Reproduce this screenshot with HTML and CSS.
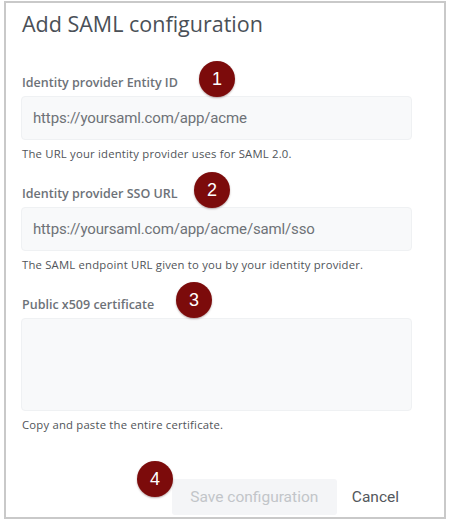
FILE: index.html
```html
<!DOCTYPE html>
<html lang="en">
<head>
<meta charset="utf-8">
<title>Add SAML configuration</title>
<link rel="stylesheet" href="styles.css">
</head>
<body>
<div class="frame">
  <h1 class="title">Add SAML configuration</h1>

  <div class="field field-first">
    <label class="label">Identity provider Entity ID</label>
    <div class="input">https://yoursaml.com/app/acme</div>
    <p class="help">The URL your identity provider uses for SAML 2.0.</p>
  </div>

  <div class="field">
    <label class="label">Identity provider SSO URL</label>
    <div class="input">https://yoursaml.com/app/acme/saml/sso</div>
    <p class="help">The SAML endpoint URL given to you by your identity provider.</p>
  </div>

  <div class="field">
    <label class="label">Public x509 certificate</label>
    <div class="input textarea"></div>
    <p class="help">Copy and paste the entire certificate.</p>
  </div>

  <div class="actions">
    <button class="btn btn-save" type="button">Save configuration</button>
    <button class="btn btn-cancel" type="button">Cancel</button>
  </div>

  <span class="badge badge-1">1</span>
  <span class="badge badge-2">2</span>
  <span class="badge badge-3">3</span>
  <span class="badge badge-4">4</span>
</div>
</body>
</html>
```

FILE: styles.css
```css
html, body {
  margin: 0;
  padding: 0;
  background: #ffffff;
}

.frame {
  position: relative;
  box-sizing: border-box;
  margin: 1px 0 0 4px;
  width: 442px;
  height: 518px;
  border: 2px solid #c9c9c9;
  padding: 6px 0 0 15px;
  overflow: hidden;
  font-family: "Open Sans", "Noto Sans", sans-serif;
}

.title {
  margin: 0;
  padding-left: 1px;
  font-size: 21.5px;
  line-height: 30px;
  font-weight: 400;
  color: #4a5057;
}

.field {
  display: flex;
  flex-direction: column;
  margin-top: 25px;
}

.field-first {
  margin-top: 36px;
}

.label {
  padding-left: 1px;
  font-size: 12.5px;
  line-height: 16px;
  font-weight: 600;
  color: #6d7278;
  letter-spacing: 0;
}

.input {
  box-sizing: border-box;
  margin-top: 5px;
  width: 391px;
  height: 44px;
  padding: 0 0 0 11px;
  display: flex;
  align-items: center;
  background: #f8f9fa;
  border: 1px solid #eff1f3;
  border-radius: 4px;
  font-family: Roboto, "Liberation Sans", sans-serif;
  font-size: 15px;
  letter-spacing: -0.15px;
  color: #6e7277;
}

.textarea {
  height: 93px;
}

.help {
  margin: 7px 0 0;
  padding-left: 1px;
  font-size: 11.3px;
  line-height: 14px;
  letter-spacing: 0.2px;
  color: #505459;
}

.actions {
  display: flex;
  justify-content: flex-end;
  width: 391px;
  margin-top: 47px;
}

.btn {
  height: 36px;
  border: none;
  font-family: Roboto, "Liberation Sans", sans-serif;
  font-size: 15.5px;
  background: transparent;
  padding: 0;
}

.btn-save {
  width: 165px;
  background: #f4f5f7;
  color: #c2c5c9;
  border-radius: 3px;
  margin-right: 2px;
}

.btn-cancel {
  padding: 0 13px;
  color: #53575c;
}

.badge {
  position: absolute;
  width: 36px;
  height: 36px;
  border-radius: 50%;
  background: #7c0b0b;
  color: #ffffff;
  display: flex;
  align-items: center;
  justify-content: center;
  font-family: "Liberation Sans", Arial, sans-serif;
  font-size: 18px;
  box-shadow: 0 1px 2px rgba(60, 0, 0, 0.35);
}

.badge-1 { left: 193px; top: 58px; }
.badge-2 { left: 188px; top: 169px; }
.badge-3 { left: 170px; top: 279px; }
.badge-4 { left: 131px; top: 458px; }
```
